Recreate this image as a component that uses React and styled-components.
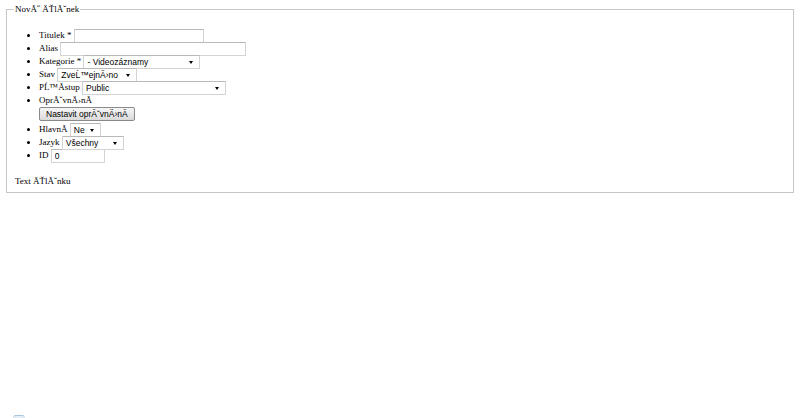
import React from "react";
import styled, {createGlobalStyle} from "styled-components";

const GlobalStyle = createGlobalStyle`
  html, body {
    margin: 0;
    padding: 0;
    background: #fff;
  }
  body {
    font-family: "Liberation Serif", "Times New Roman", serif;
    font-size: 9px;
    color: #000;
  }
`;

const Page = styled.div`
  padding: 3px 6px 0;
  height: 418px;
  box-sizing: border-box;
  display: flex;
  flex-direction: column;
`;

const Fieldset = styled.fieldset`
  margin: 0;
  padding: 0 8px 4px;
  border: 1px solid #c6c6c6;
  min-width: 0;
`;

const Legend = styled.legend`
  padding: 0 1px;
  margin-left: -1px;
  line-height: 13px;
`;

const List = styled.ul`
  margin: 12px 0 0;
  padding-left: 24px;
  list-style: disc;
`;

const Item = styled.li`
  line-height: 13px;
  height: 12px;
  padding-top: 1px;
  white-space: nowrap;
`;

const OpenItem = styled(Item)`
  height: auto;
`;

const TextInput = styled.input`
  box-sizing: border-box;
  width: ${(p) => p.$w}px;
  height: 14px;
  margin: 0;
  padding: 0 3px;
  border: 1px solid #d3d3d3;
  border-top-color: #b9b9b9;
  font-family: "Liberation Sans", Arial, sans-serif;
  font-size: 8.5px;
  color: #000;
  vertical-align: top;
  background: #fff;
  outline: none;
`;

const SelectBox = styled.span`
  position: relative;
  display: inline-block;
  vertical-align: top;
  width: ${(p) => p.$w}px;
  height: 14px;
  &::after {
    content: "";
    position: absolute;
    right: 7px;
    top: 6px;
    border-left: 2.5px solid transparent;
    border-right: 2.5px solid transparent;
    border-top: 3px solid #000;
    pointer-events: none;
  }
`;

const Select = styled.select`
  appearance: none;
  -webkit-appearance: none;
  display: block;
  box-sizing: border-box;
  width: 100%;
  height: 14px;
  margin: 0;
  padding: 0 0 0 3px;
  border: 1px solid #d3d3d3;
  border-top-color: #b9b9b9;
  border-radius: 0;
  background: #fff;
  font-family: "Liberation Sans", Arial, sans-serif;
  font-size: 8.5px;
  line-height: 12px;
  color: #000;
  outline: none;
`;

const Button = styled.button`
  box-sizing: border-box;
  height: 14px;
  margin: 0;
  padding: 0 6px;
  border: 1px solid #8a8a8a;
  border-radius: 2px;
  background: linear-gradient(#f6f6f6, #dadada);
  font-family: "Liberation Sans", Arial, sans-serif;
  font-size: 8.5px;
  line-height: 12px;
  color: #000;
  white-space: nowrap;
  vertical-align: top;
`;

const ButtonRow = styled.div`
  height: 15px;
`;

const Body = styled.p`
  margin: 14px 0 0;
  line-height: 13px;
`;

const Bottom = styled.div`
  margin-top: auto;
  margin-left: 7px;
  width: 12px;
  height: 2px;
  border-top: 1px solid #a9c3d9;
  border-radius: 6px 6px 0 0;
  background: #e4eef6;
`;

function Dropdown({width, value}) {
  return (
    <SelectBox $w={width}>
      <Select defaultValue={value}>
        <option>{value}</option>
      </Select>
    </SelectBox>
  );
}

export default function App() {
  return (
    <>
      <GlobalStyle />
      <Page>
        <Fieldset>
          <Legend>NovĂ˝ ÄŤlĂˇnek</Legend>
          <List>
            <Item>
              Titulek * <TextInput $w={130} />
            </Item>
            <Item>
              Alias <TextInput $w={186} />
            </Item>
            <Item>
              Kategorie * <Dropdown width={117} value="- Videozáznamy" />
            </Item>
            <Item>
              Stav <Dropdown width={80} value="ZveĹ™ejnÄ›no" />
            </Item>
            <Item>
              PĹ™Ă­stup <Dropdown width={144} value="Public" />
            </Item>
            <OpenItem>
              OprĂˇvnÄ›nĂ­
              <ButtonRow>
                <Button>Nastavit oprĂˇvnÄ›nĂ­</Button>
              </ButtonRow>
            </OpenItem>
            <Item>
              HlavnĂ­ <Dropdown width={31} value="Ne" />
            </Item>
            <Item>
              Jazyk <Dropdown width={62} value="Všechny" />
            </Item>
            <Item>
              ID <TextInput $w={54} defaultValue="0" />
            </Item>
          </List>
          <Body>Text ÄŤlĂˇnku</Body>
        </Fieldset>
        <Bottom />
      </Page>
    </>
  );
}
